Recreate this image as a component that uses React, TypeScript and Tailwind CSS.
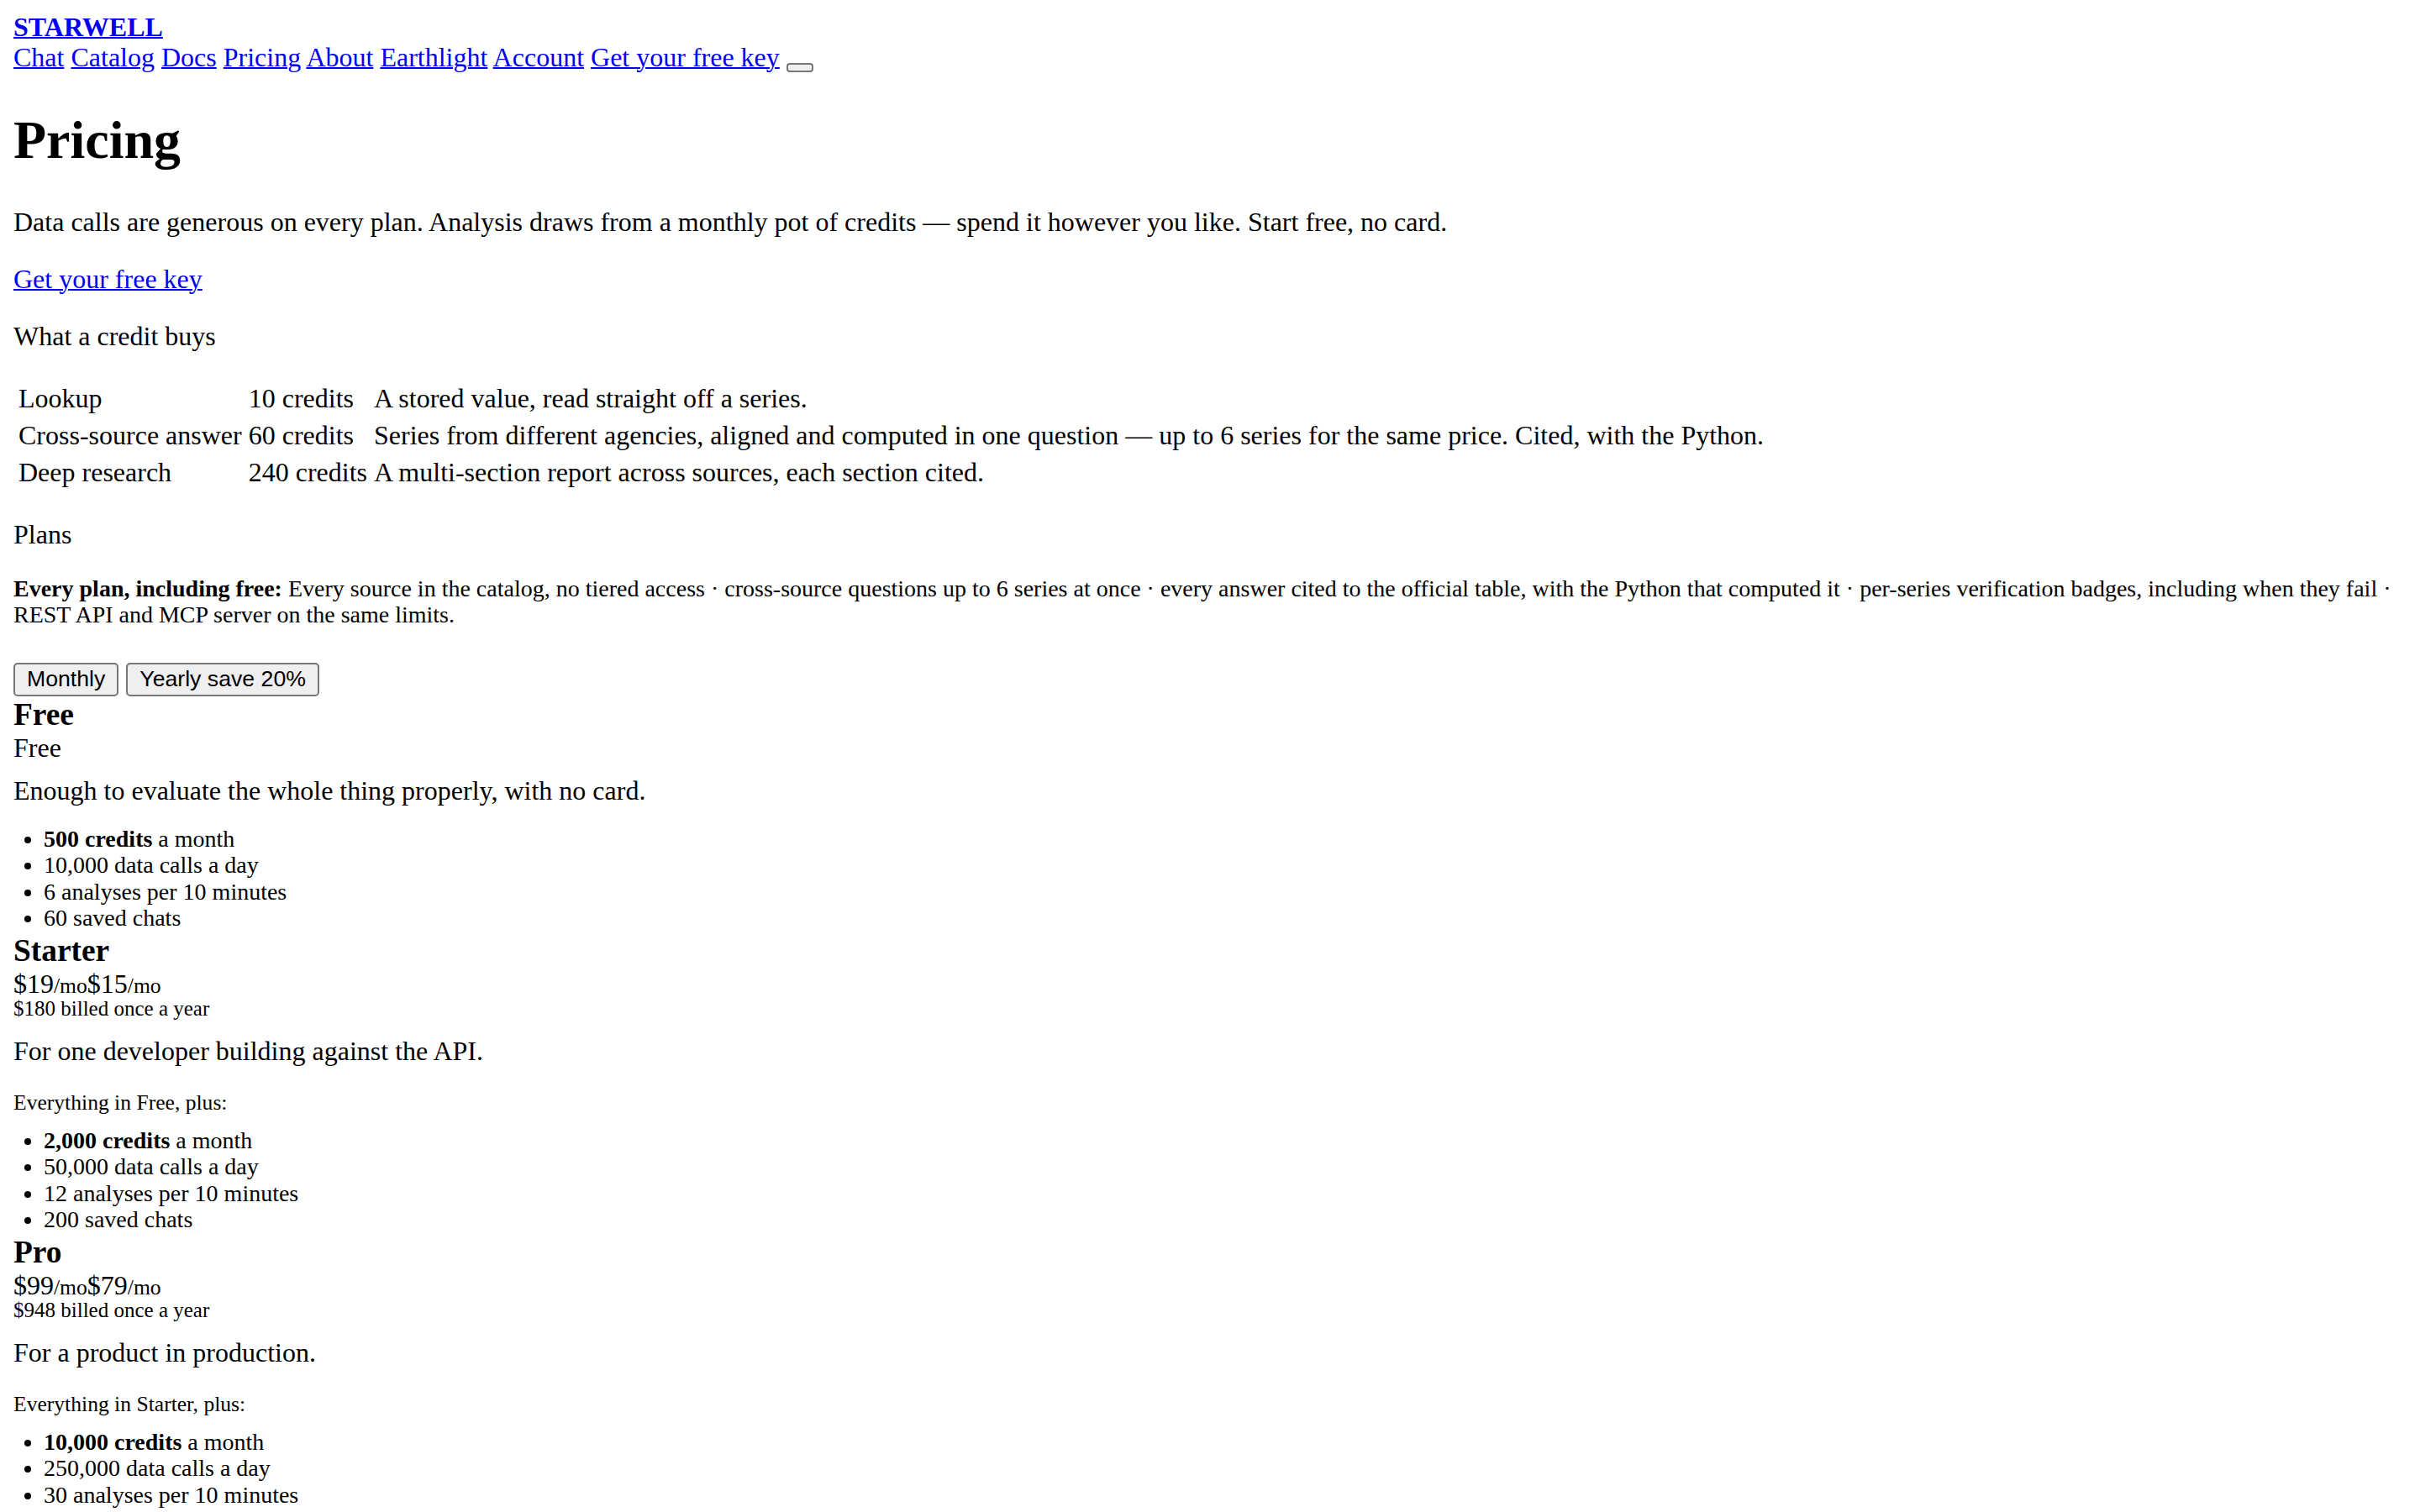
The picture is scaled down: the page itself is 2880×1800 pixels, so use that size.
const navLinks = ['Chat', 'Catalog', 'Docs', 'Pricing', 'About', 'Earthlight', 'Account', 'Get your free key']

const creditRows = [
  ['Lookup', '10 credits', 'A stored value, read straight off a series.'],
  [
    'Cross-source answer',
    '60 credits',
    'Series from different agencies, aligned and computed in one question — up to 6 series for the same price. Cited, with the Python.',
  ],
  ['Deep research', '240 credits', 'A multi-section report across sources, each section cited.'],
]

interface Plan {
  name: string
  monthly?: string
  yearly?: string
  billed?: string
  blurb: string
  intro?: string
  credits: string
  features: string[]
}

const plans: Plan[] = [
  {
    name: 'Free',
    blurb: 'Enough to evaluate the whole thing properly, with no card.',
    credits: '500 credits',
    features: ['10,000 data calls a day', '6 analyses per 10 minutes', '60 saved chats'],
  },
  {
    name: 'Starter',
    monthly: '$19',
    yearly: '$15',
    billed: '$180 billed once a year',
    blurb: 'For one developer building against the API.',
    intro: 'Everything in Free, plus:',
    credits: '2,000 credits',
    features: ['50,000 data calls a day', '12 analyses per 10 minutes', '200 saved chats'],
  },
  {
    name: 'Pro',
    monthly: '$99',
    yearly: '$79',
    billed: '$948 billed once a year',
    blurb: 'For a product in production.',
    intro: 'Everything in Starter, plus:',
    credits: '10,000 credits',
    features: ['250,000 data calls a day', '30 analyses per 10 minutes', '1,000 saved chats'],
  },
]

const link = 'text-[#0000ee] underline decoration-2'

function PlanBlock({ plan, first }: { plan: Plan; first: boolean }) {
  return (
    <section>
      <h3 className={`text-[37.4px] font-bold leading-[43px] ${first ? 'mt-0' : 'mt-[2px]'}`}>{plan.name}</h3>
      <div className="leading-[36px]">
        {plan.monthly ? (
          <>
            <span>{plan.monthly}</span>
            <span className="text-[25.6px]">/mo</span>
            <span>{plan.yearly}</span>
            <span className="text-[25.6px]">/mo</span>
          </>
        ) : (
          <span>Free</span>
        )}
      </div>
      {plan.billed && <div className="text-[25px] leading-[18px]">{plan.billed}</div>}
      <p className={plan.billed ? 'mt-[23px]' : 'mt-[15px]'}>{plan.blurb}</p>
      {plan.intro && <p className="mt-[29px] text-[25.6px] leading-[29.4px]">{plan.intro}</p>}
      <ul className={`list-disc pl-[36px] text-[28px] leading-[31.4px] ${plan.intro ? 'mt-[14px]' : 'mt-[24px]'}`}>
        <li>
          <strong className="font-bold">{plan.credits}</strong> a month
        </li>
        {plan.features.map((f) => (
          <li key={f}>{f}</li>
        ))}
      </ul>
    </section>
  )
}

export default function App() {
  return (
    <div className="min-h-screen bg-white px-[16px] pt-[14px] font-['Liberation_Serif',serif] text-[32px] leading-[36px] text-black">
      {/* Header */}
      <header>
        <div>
          <a href="#" className={`${link} font-bold`}>
            STARWELL
          </a>
        </div>
        <nav>
          {navLinks.map((l) => (
            <span key={l}>
              <a href="#" className={link}>
                {l}
              </a>{' '}
            </span>
          ))}
          <button
            aria-label="Toggle theme"
            className="inline-block h-[11px] w-[32px] rounded-[4px] border-2 border-[#767676] bg-[#efefef] align-[-5px]"
          />
        </nav>
      </header>

      <main>
        <h1 className="mt-[45px] text-[64px] font-bold leading-[72px]">Pricing</h1>
        <p className="mt-[43px]">
          Data calls are generous on every plan. Analysis draws from a monthly pot of credits — spend it however you
          like. Start free, no card.
        </p>
        <p className="mt-[32px]">
          <a href="#" className={link}>
            Get your free key
          </a>
        </p>
        <p className="mt-[32px]">What a credit buys</p>

        {/* Credit table */}
        <table className="mt-[32px] border-separate border-spacing-[4px]">
          <tbody>
            {creditRows.map((row) => (
              <tr key={row[0]}>
                {row.map((cell) => (
                  <td key={cell} className="p-[2px] text-left leading-[36px]">
                    {cell}
                  </td>
                ))}
              </tr>
            ))}
          </tbody>
        </table>

        <p className="mt-[32px]">Plans</p>
        <p className="mt-[31px] text-[28px] leading-[31.4px]">
          <strong className="font-bold">Every plan, including free:</strong> Every source in the catalog, no tiered
          access · cross-source questions up to 6 series at once · every answer cited to the official table, with the
          Python that computed it · per-series verification badges, including when they fail · REST API and MCP server
          on the same limits.
        </p>

        {/* Billing toggle */}
        <div className="mt-[41px] flex gap-[9px] font-['Liberation_Sans',Arial,sans-serif] text-[26.67px] leading-[31px]">
          <button className="flex h-[40px] items-center rounded-[5px] border-2 border-[#767676] bg-[#efefef] px-[14px]">
            Monthly
          </button>
          <button className="flex h-[40px] items-center rounded-[5px] border-2 border-[#767676] bg-[#efefef] px-[14px]">
            Yearly save 20%
          </button>
        </div>

        {plans.map((p, i) => (
          <PlanBlock key={p.name} plan={p} first={i === 0} />
        ))}
      </main>
    </div>
  )
}
